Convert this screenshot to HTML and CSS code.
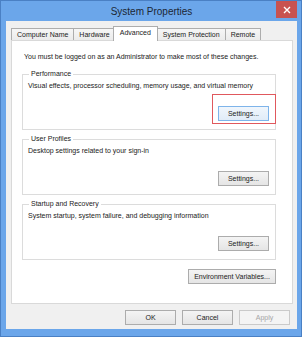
FILE: index.html
```html
<!DOCTYPE html>
<html>
<head>
    <title>System Properties</title>
    <link rel="stylesheet" href="styles.css">
</head>
<body>
    <div class="window">
        <div class="titlebar">
            <span class="title">System Properties</span>
            <div class="close">
                <svg width="8" height="8" viewBox="0 0 8 8">
                    <path d="M1 1 L7 7 M7 1 L1 7" stroke="#fff" stroke-width="1.4" fill="none"/>
                </svg>
            </div>
        </div>
        <div class="client">
            <div class="tabs">
                <div class="tab">Computer Name</div>
                <div class="tab">Hardware</div>
                <div class="tab active">Advanced</div>
                <div class="tab">System Protection</div>
                <div class="tab">Remote</div>
            </div>
            <div class="panel">
                <p class="intro">You must be logged on as an Administrator to make most of these changes.</p>

                <fieldset class="group">
                    <legend>Performance</legend>
                    <p class="desc">Visual effects, processor scheduling, memory usage, and virtual memory</p>
                    <div class="actions">
                        <span class="marked">
                            <button class="btn hot">Settings...</button>
                            <span class="mark"></span>
                        </span>
                    </div>
                </fieldset>

                <fieldset class="group">
                    <legend>User Profiles</legend>
                    <p class="desc">Desktop settings related to your sign-in</p>
                    <div class="actions">
                        <button class="btn">Settings...</button>
                    </div>
                </fieldset>

                <fieldset class="group">
                    <legend>Startup and Recovery</legend>
                    <p class="desc">System startup, system failure, and debugging information</p>
                    <div class="actions">
                        <button class="btn">Settings...</button>
                    </div>
                </fieldset>

                <div class="actions env">
                    <button class="btn wide">Environment Variables...</button>
                </div>
            </div>
            <div class="footer">
                <button class="btn">OK</button>
                <button class="btn">Cancel</button>
                <button class="btn" disabled>Apply</button>
            </div>
        </div>
    </div>
</body>
</html>
```

FILE: styles.css
```css
* {
    box-sizing: border-box;
}
body {
    margin: 0;
    font-family: "Liberation Sans", Arial, sans-serif;
    font-size: 7px;
    color: #222;
}
.window {
    position: relative;
    display: flex;
    flex-direction: column;
    width: 302px;
    height: 337px;
    background: #6ba6ea;
    border: 1px solid #4a80c4;
    padding: 0 4px 7px 5px;
}
.titlebar {
    display: flex;
    align-items: center;
    justify-content: center;
    height: 20px;
}
.title {
    font-size: 10px;
    color: #1b2634;
}
.close {
    position: absolute;
    top: 0;
    right: 4px;
    display: flex;
    align-items: center;
    justify-content: center;
    width: 21px;
    height: 17px;
    background: #c85250;
}
.client {
    flex: 1;
    display: flex;
    flex-direction: column;
    background: #f0f0f0;
    padding: 5px 4px 0 5px;
}
.tabs {
    display: flex;
    align-items: flex-end;
    height: 15px;
    margin-bottom: -1px;
}
.tab {
    height: 12px;
    line-height: 11px;
    margin: 0 -1px 1px 0;
    padding: 0 5px;
    border: 1px solid #adadad;
    border-bottom: none;
    background: linear-gradient(#f6f6f6, #ebebeb);
    white-space: nowrap;
}
.tab.active {
    position: relative;
    z-index: 1;
    height: 15px;
    line-height: 12px;
    margin: 0 -2px 0 -2px;
    padding: 0 6px;
    background: #fff;
}
.tab.active + .tab {
    margin-left: 1px;
}
.panel {
    flex: 1;
    background: #fff;
    border: 1px solid #d9d9d9;
    padding: 10px 16px 0 10px;
}
.intro {
    margin: 0 0 0 2px;
    line-height: 12px;
}
.group {
    margin: 6px 0 0 0;
    padding: 0 6px 8px 5px;
    border: 1px solid #dcdcdc;
    min-width: 0;
}
.group + .group {
    margin-top: 4px;
}
.group legend {
    margin-left: 1px;
    padding: 0 2px;
    line-height: 10px;
}
.desc {
    margin: 1px 0 0 0;
    line-height: 12px;
}
.actions {
    display: flex;
    justify-content: flex-end;
    margin-top: 14px;
}
.actions.env {
    margin-top: 9px;
}
.marked {
    position: relative;
    display: flex;
}
.mark {
    position: absolute;
    top: -12px;
    right: -7px;
    bottom: -3px;
    left: -6px;
    border: 1px solid #e0585d;
    pointer-events: none;
}
.btn {
    width: 51px;
    height: 15px;
    padding: 0;
    font: inherit;
    color: inherit;
    border: 1px solid #acacac;
    border-radius: 0;
    background: linear-gradient(#f4f4f4, #e5e5e5);
}
.btn.hot {
    border-color: #7eb4ea;
    background: linear-gradient(#f0f6fc, #e1ecf8);
}
.btn.wide {
    width: 88px;
}
.btn:disabled {
    color: #a6a6a6;
    border-color: #cacaca;
    background: #f4f4f4;
}
.footer {
    display: flex;
    justify-content: flex-end;
    gap: 6px;
    height: 25px;
    padding: 6px 3px 0 0;
}
```
